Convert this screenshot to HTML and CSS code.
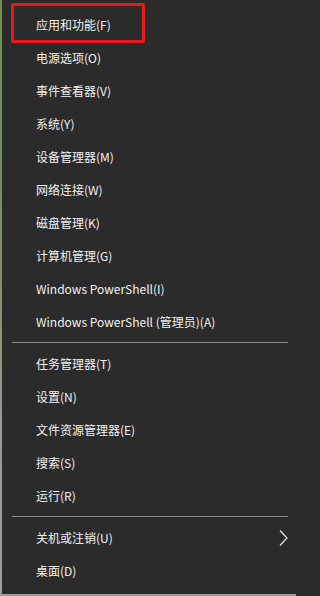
FILE: index.html
```html
<!DOCTYPE html>
<html lang="zh-CN">
<head>
<meta charset="utf-8">
<title>菜单</title>
<link rel="stylesheet" href="styles.css">
</head>
<body>
<div class="menu">
  <div class="highlight"></div>
  <ul class="group">
    <li class="item">应用和功能(F)</li>
    <li class="item">电源选项(O)</li>
    <li class="item">事件查看器(V)</li>
    <li class="item">系统(Y)</li>
    <li class="item">设备管理器(M)</li>
    <li class="item">网络连接(W)</li>
    <li class="item">磁盘管理(K)</li>
    <li class="item">计算机管理(G)</li>
    <li class="item">Windows PowerShell(I)</li>
    <li class="item">Windows PowerShell (管理员)(A)</li>
  </ul>
  <div class="sep"></div>
  <ul class="group">
    <li class="item">任务管理器(T)</li>
    <li class="item">设置(N)</li>
    <li class="item">文件资源管理器(E)</li>
    <li class="item">搜索(S)</li>
    <li class="item">运行(R)</li>
  </ul>
  <div class="sep"></div>
  <ul class="group">
    <li class="item has-sub">关机或注销(U)
      <svg class="chev" width="9" height="16" viewBox="0 0 9 16"><path d="M1 0.5 L8 8 L1 15.5" fill="none" stroke="#e6e6e6" stroke-width="1.2"/></svg>
    </li>
    <li class="item">桌面(D)</li>
  </ul>
</div>
</body>
</html>
```

FILE: styles.css
```css
html, body {
  margin: 0;
  padding: 0;
  background: #2b2b2b;
}
.menu {
  position: relative;
  box-sizing: border-box;
  width: 296px;
  height: 596px;
  background:
    linear-gradient(#718e4f 0%, #7b8f66 40%, #969a90 70%, #9d9d9d 100%) left top / 2px 100% no-repeat,
    #2b2b2b;
  border-bottom: 2px solid #9d9d9d;
  padding-top: 8px;
  padding-left: 2px;
  font-family: "Noto Sans CJK SC", "Noto Sans", sans-serif;
  font-size: 12px;
  color: #f2f2f2;
}
.group {
  list-style: none;
  margin: 0;
  padding: 0;
}
.item {
  height: 33px;
  display: flex;
  align-items: center;
  padding-left: 34px;
  padding-right: 8px;
  white-space: nowrap;
}
.has-sub {
  justify-content: space-between;
}
.chev {
  display: block;
  margin-top: 1px;
}
.sep {
  height: 9px;
  display: flex;
  align-items: center;
  padding: 0 8px 0 10px;
}
.sep::after {
  content: "";
  display: block;
  flex: 1;
  height: 1px;
  background: #8a8a8a;
}
.highlight {
  position: absolute;
  left: 11px;
  top: 3px;
  width: 134px;
  height: 40px;
  box-sizing: border-box;
  border: 3px solid #e8191b;
  border-radius: 2px;
}
```
